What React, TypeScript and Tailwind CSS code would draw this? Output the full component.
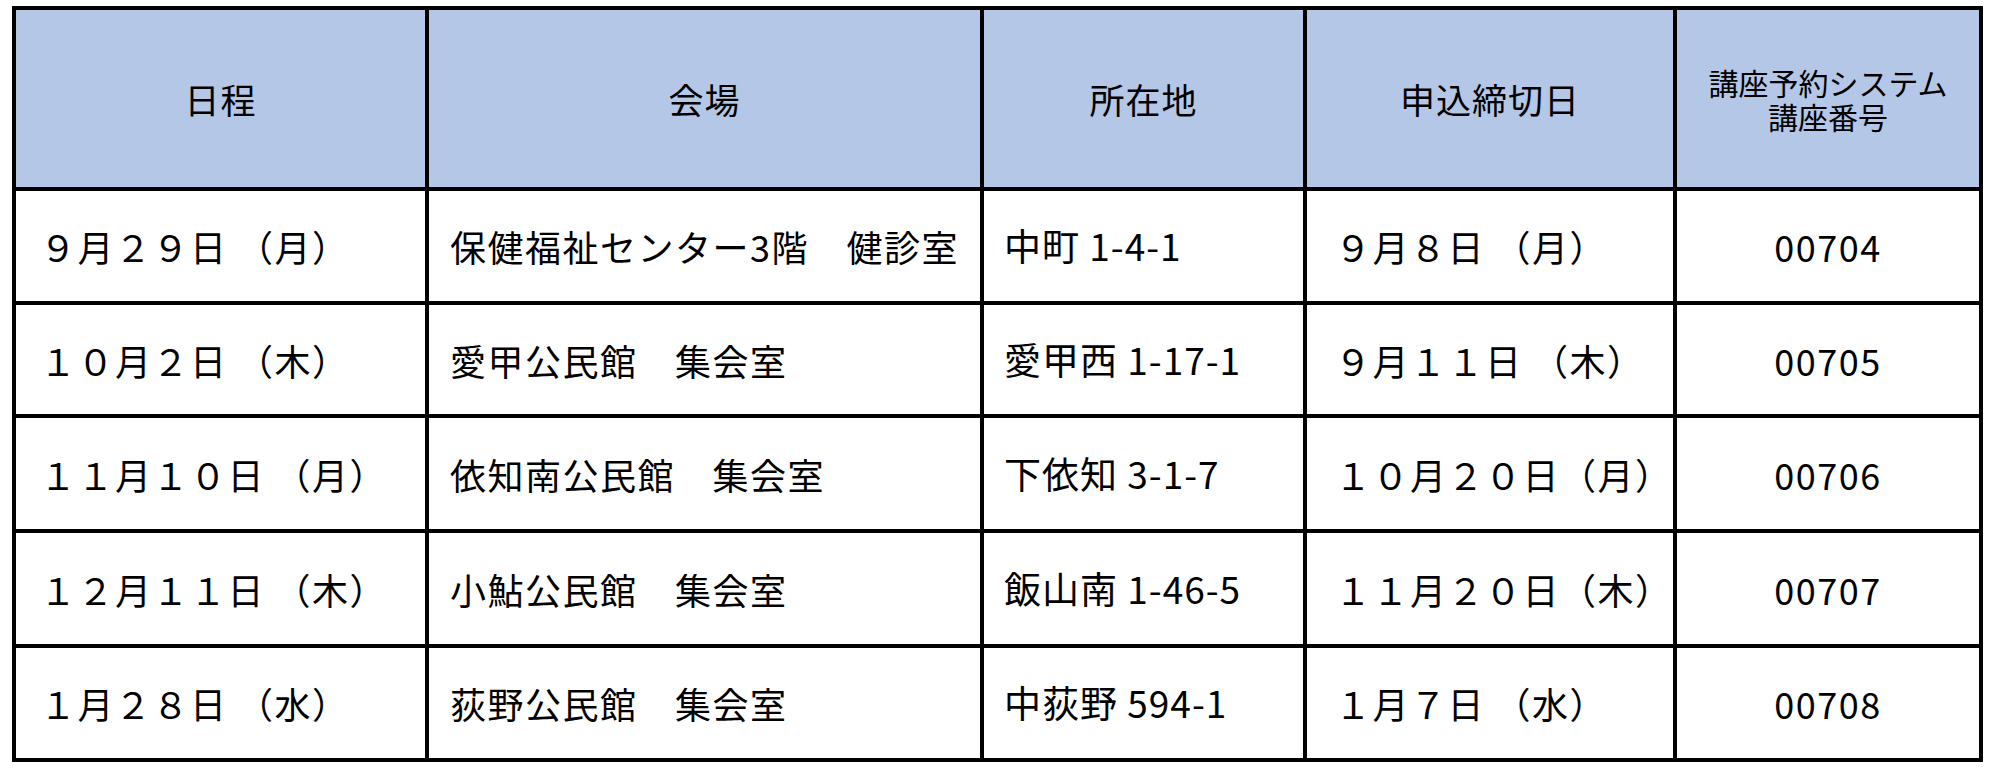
import React from 'react';

type Row = {
  date: string;
  venue: string;
  address: string;
  deadline: string;
  code: string;
};

const rows: Row[] = [
  { date: '９月２９日 （月）', venue: '保健福祉センター3階　健診室', address: '中町 1-4-1', deadline: '９月８日 （月）', code: '00704' },
  { date: '１０月２日 （木）', venue: '愛甲公民館　集会室', address: '愛甲西 1-17-1', deadline: '９月１１日 （木）', code: '00705' },
  { date: '１１月１０日 （月）', venue: '依知南公民館　集会室', address: '下依知 3-1-7', deadline: '１０月２０日（月）', code: '00706' },
  { date: '１２月１１日 （木）', venue: '小鮎公民館　集会室', address: '飯山南 1-46-5', deadline: '１１月２０日（木）', code: '00707' },
  { date: '１月２８日 （水）', venue: '荻野公民館　集会室', address: '中荻野 594-1', deadline: '１月７日 （水）', code: '00708' },
];

// ヘッダーセル
const Head = ({ children }: { children: React.ReactNode }) => (
  <div className="flex items-center justify-center bg-[#b4c7e7] text-center text-[35px] leading-none tracking-[1px] text-black">
    {children}
  </div>
);

export default function App() {
  return (
    <div className="min-h-[778px] bg-white pl-[12px] pt-[6px] font-['Noto_Sans_CJK_JP',sans-serif]">
      <div className="grid w-[1971px] grid-cols-[409px_551px_319px_366px_302px] grid-rows-[177px_110px_109px_111px_111px_110px] gap-[4px] bg-black p-[4px]">
        <Head>日程</Head>
        <Head>会場</Head>
        <Head>所在地</Head>
        <Head>申込締切日</Head>
        <div className="flex flex-col items-center justify-center bg-[#b4c7e7] text-center text-[30px] leading-[34px] text-black">
          <span>講座予約システム</span>
          <span>講座番号</span>
        </div>

        {rows.map(r => (
          <React.Fragment key={r.code}>
            <div className="flex items-center whitespace-pre bg-white pl-[24px] text-[36px] tracking-[1.5px] text-black">{r.date}</div>
            <div className="flex items-center bg-white pl-[21px] text-[36px] tracking-[1.5px] text-black">{r.venue}</div>
            <div className="flex items-center bg-white pl-[20px] text-[37px] tracking-[1px] text-black">{r.address}</div>
            <div className="flex items-center whitespace-pre bg-white pl-[28px] text-[36px] tracking-[1.5px] text-black">{r.deadline}</div>
            <div className="flex items-center justify-center bg-white text-[36px] tracking-[1.5px] text-black">{r.code}</div>
          </React.Fragment>
        ))}
      </div>
    </div>
  );
}
